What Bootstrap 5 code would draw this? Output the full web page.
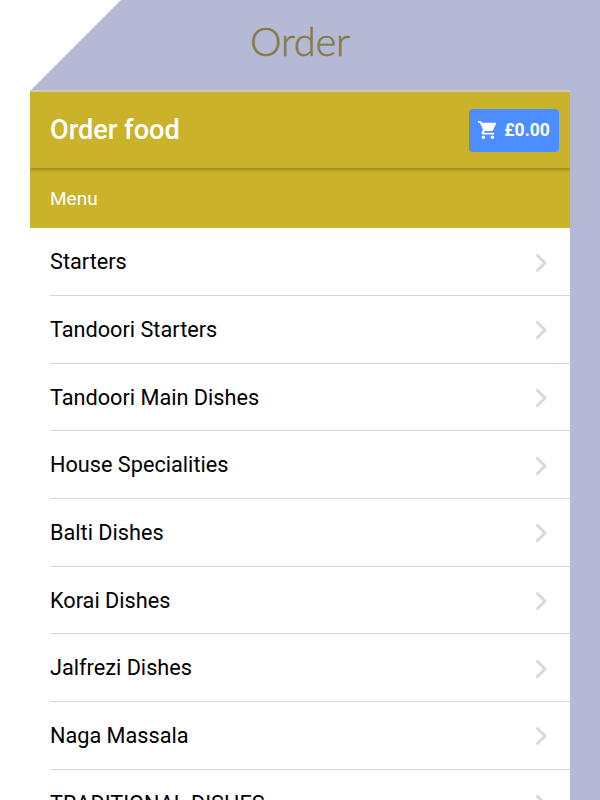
<!DOCTYPE html>
<html lang="en"><head><meta charset="utf-8"><title>Order</title>
<link href="https://cdn.jsdelivr.net/npm/bootstrap@5.3.0/dist/css/bootstrap.min.css" rel="stylesheet">
<style>
html,body{height:800px;overflow:hidden}
body{background:#b5b9d5;font-family:Roboto,sans-serif;color:#000}
.stage{width:600px;height:800px;background:linear-gradient(to right,#fff 30px,transparent 30px) 0 90px/600px 710px no-repeat,linear-gradient(135deg,#fff 85.2px,transparent 85.9px)}
.page-title{height:90px;padding-top:16px;font:300 40px/50px Lato,sans-serif;color:#857b45;letter-spacing:-.3px;-webkit-text-stroke:.5px #857b45}
.app{width:540px;margin-left:30px;height:710px;background:#fff}
.topbar{height:78px;background:#cab22a;border-top:2px solid #d0cab0;padding:0 11px 0 20px;box-shadow:0 1px 4px rgba(70,55,0,.5);clip-path:inset(0 0 -8px 0);position:relative}
.topbar h2{font-size:27.1px;font-weight:500;line-height:32px}
.cart{background:#4c8dff;width:90px;height:43px;border-radius:4px;font-size:17.5px;font-weight:700;color:#fff}
.menu-head{height:60.3px;background:#cab22a;padding:3px 0 0 20px;color:#fff;font-size:19px}
.dish{height:67.7px;margin-left:20px;padding:2px 20px 0 0;border-bottom:1px solid #d6d6d6;font-size:21.7px}
</style>
<script src="https://cdn.jsdelivr.net/npm/bootstrap@5.3.0/dist/js/bootstrap.bundle.min.js"></script></head>
<body><main class="stage overflow-hidden"><h1 class="page-title text-center m-0">Order</h1>
<section class="app overflow-hidden"><header class="topbar d-flex align-items-center justify-content-between text-white"><h2 class="m-0">Order food</h2>
<button class="cart border-0 p-0 d-flex align-items-center justify-content-center gap-2"><svg width="18" height="18" viewBox="1 2 20 20" fill="#fff"><path d="M7 18a2 2 0 1 0 0 4 2 2 0 0 0 0-4ZM1 2v2h2l3.6 7.59-1.35 2.45C4.52 15.37 5.48 17 7 17h12v-2H7.42l1.13-2h7.45c.75 0 1.41-.41 1.75-1.03L21.7 4H5.21l-.94-2ZM17 18a2 2 0 1 0 0 4 2 2 0 0 0 0-4Z"/></svg>£0.00</button></header>
<div class="menu-head d-flex align-items-center">Menu</div>
<div id="list"></div></section></main>
<script>
document.getElementById('list').innerHTML=['Starters','Tandoori Starters','Tandoori Main Dishes','House Specialities','Balti Dishes','Korai Dishes','Jalfrezi Dishes','Naga Massala','TRADITIONAL DISHES'].map(t=>`<div class="dish d-flex align-items-center justify-content-between"><span>${t}</span><svg width="16" height="22" viewBox="0 0 16 22" fill="none" stroke="#d9d9d9" stroke-width="2.9"><path d="M2.5 2.5l8.5 8.5-8.5 8.5"/></svg></div>`).join('');
</script></body></html>
